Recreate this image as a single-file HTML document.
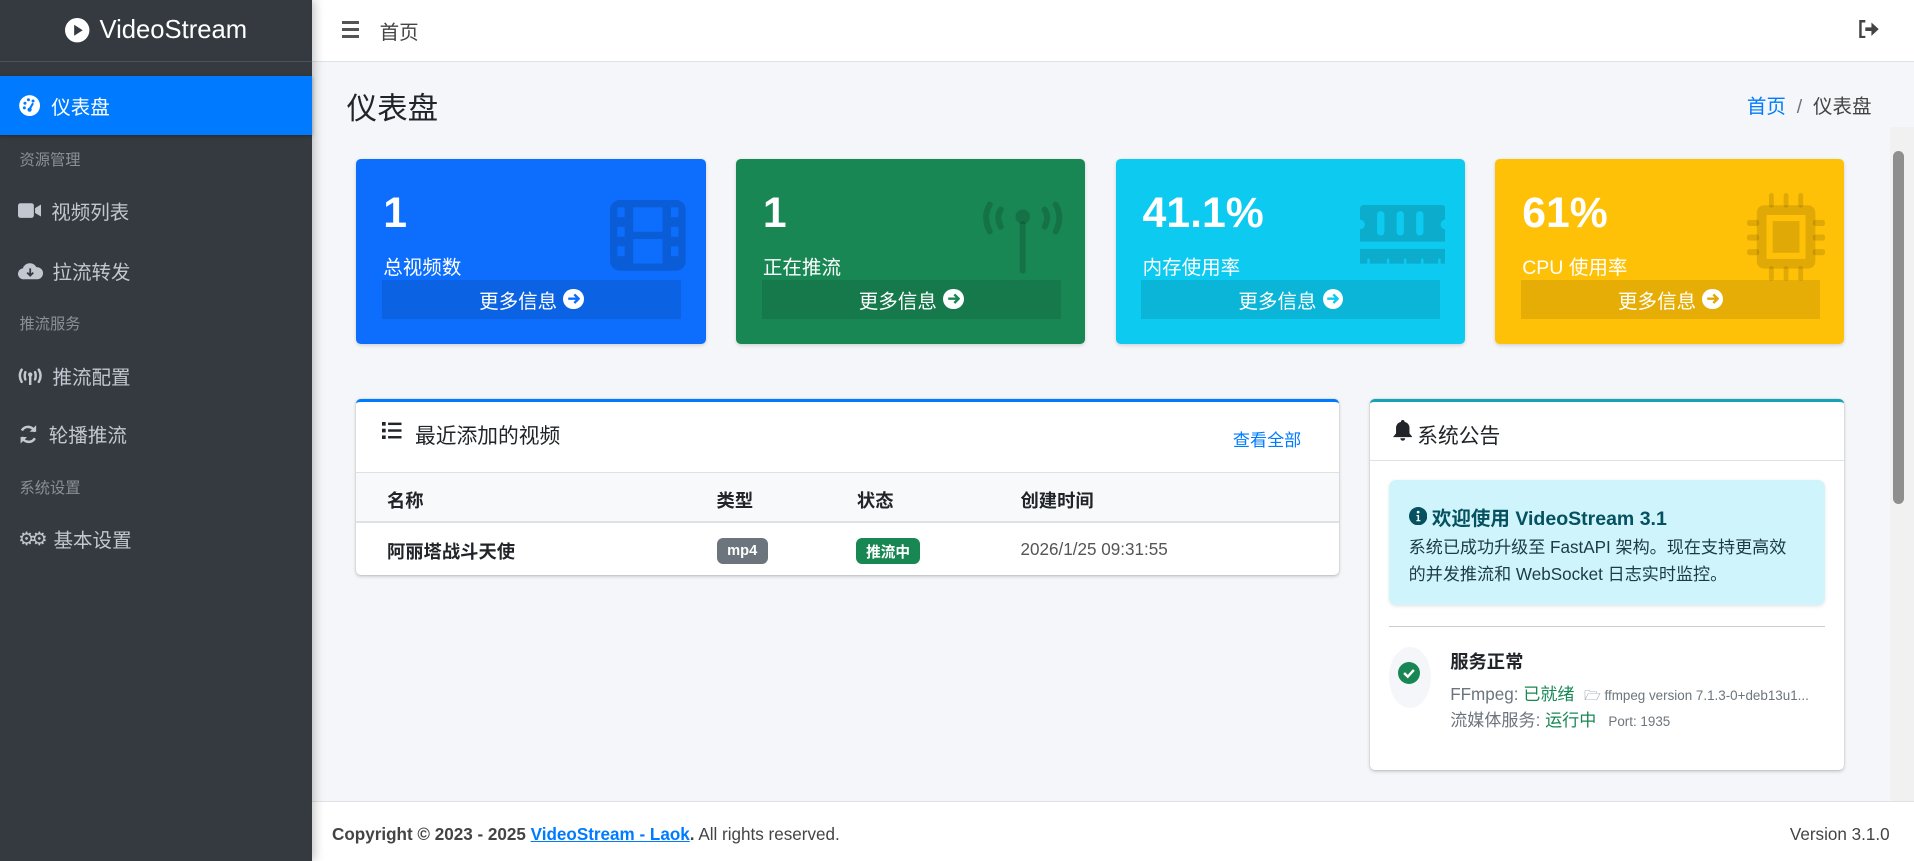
<!DOCTYPE html>
<html><head><meta charset="utf-8"><style>
*{box-sizing:border-box;margin:0;padding:0}
html{zoom:1.2207}
body{width:1568px;height:705px;overflow:hidden;position:relative;background:#f4f6f9;font-family:"Liberation Sans","Noto Sans CJK SC",sans-serif;color:#212529}
.abs{position:absolute}
.side{left:0;top:0;width:256px;height:705px;background:#343a40;box-shadow:2px 0 8px rgba(0,0,0,.25);z-index:2}
.brand{height:51px;border-bottom:1px solid #4b545c;color:#fff;font-size:21px;font-weight:300;display:flex;align-items:center;justify-content:center;gap:8px}
.nav{position:absolute;left:0;width:256px;height:49px;display:flex;align-items:center;padding-left:15px;color:#c2c7d0;font-size:16px;gap:8px}
.nav.act{background:#007bff;color:#fff;box-shadow:0 1px 3px rgba(0,0,0,.3)}
.hdr{position:absolute;left:16px;font-size:12.5px;color:#8a9096}
.top{left:256px;top:0;width:1312px;height:51px;background:#fff;border-bottom:1px solid #dee2e6}
.card{position:absolute;top:130px;width:286px;height:152px;border-radius:4px;color:#fff;box-shadow:0 1px 3px rgba(0,0,0,.15)}
.card .n{position:absolute;left:22px;top:25px;font-size:35px;font-weight:bold}
.card .l{position:absolute;left:22px;top:76px;font-size:16px}
.card .f{position:absolute;left:21px;top:99px;width:245px;height:32px;background:rgba(0,0,0,.1);font-size:16px;display:flex;align-items:center;justify-content:center;gap:5px}
.card svg.ic{position:absolute;right:16px;top:34px}
.arr{width:17px;height:17px;border-radius:50%;background:#fff;display:inline-flex;align-items:center;justify-content:center}
.box{position:absolute;background:#fff;border-radius:4px;box-shadow:0 0 1px rgba(0,0,0,.2),0 1px 3px rgba(0,0,0,.2)}
.th{position:absolute;font-weight:bold;font-size:15px;top:399px}
.badge{position:absolute;top:441px;height:21px;border-radius:5px;color:#fff;font-size:12px;font-weight:bold;display:flex;align-items:center;justify-content:center}
</style></head><body>
<div class="abs side">
 <div class="brand"><svg width="20" height="20" viewBox="0 0 20 20"><circle cx="10" cy="10" r="10" fill="#fff"/><path d="M7.5 5.5L14.5 10L7.5 14.5Z" fill="#343a40"/></svg>VideoStream</div>
 <div class="nav act" style="top:62px"><svg width="19" height="19" viewBox="0 0 20 20"><circle cx="10" cy="10" r="9" fill="#fff"/><circle cx="6" cy="8" r="1.3" fill="#007bff"/><circle cx="9" cy="5" r="1.3" fill="#007bff"/><circle cx="13" cy="6" r="1.3" fill="#007bff"/><circle cx="5.5" cy="12" r="1.3" fill="#007bff"/><path d="M10 13L13 8" stroke="#007bff" stroke-width="1.8"/><circle cx="10" cy="13.5" r="1.8" fill="#007bff"/></svg>仪表盘</div>
 <div class="hdr" style="top:121px">资源管理</div>
 <div class="nav" style="top:148px"><svg width="19" height="14" viewBox="0 0 19 14"><rect x="0" y="1" width="13" height="12" rx="2" fill="#c2c7d0"/><path d="M14 5L19 2V12L14 9Z" fill="#c2c7d0"/></svg>视频列表</div>
 <div class="nav" style="top:197px"><svg width="20" height="16" viewBox="0 0 20 16"><path d="M5 15A4.5 4.5 0 0 1 4 6A6 6 0 0 1 15 5A5 5 0 0 1 16 15Z" fill="#c2c7d0"/><path d="M10 6V12M7.5 9.5L10 12L12.5 9.5" stroke="#343a40" stroke-width="1.5" fill="none"/></svg> 拉流转发</div>
 <div class="hdr" style="top:256px">推流服务</div>
 <div class="nav" style="top:283px"><svg width="20" height="16" viewBox="0 0 20 16" fill="none" stroke="#c2c7d0" stroke-width="2" stroke-linecap="round"><path d="M3 3Q0 8 3 13M6 5Q5 8 6 11M17 3Q20 8 17 13M14 5Q15 8 14 11M10 8V15"/><circle cx="10" cy="7" r="1.8" fill="#c2c7d0" stroke="none"/></svg>推流配置</div>
 <div class="nav" style="top:331px"><svg width="17" height="17" viewBox="0 0 16 16"><path d="M13 6A5.5 5.5 0 0 0 3 5M3 10A5.5 5.5 0 0 0 13 11" stroke="#c2c7d0" stroke-width="2" fill="none"/><path d="M14 1V6H9Z M2 15V10H7Z" fill="#c2c7d0"/></svg> 轮播推流</div>
 <div class="hdr" style="top:390px">系统设置</div>
 <div class="nav" style="top:417px"><span style="font-size:15px;letter-spacing:-3px">⚙⚙</span> 基本设置</div>
</div>
<div class="abs top">
 <div class="abs" style="left:24px;top:17px;width:14px"><div style="height:2.5px;background:#555;margin-bottom:3.5px"></div><div style="height:2.5px;background:#555;margin-bottom:3.5px"></div><div style="height:2.5px;background:#555"></div></div>
 <div class="abs" style="left:55px;top:13px;font-size:16px;color:#444">首页</div>
 <svg class="abs" style="left:1266px;top:16px" width="17" height="15" viewBox="0 0 17 15"><path d="M6 1H2V14H6" stroke="#444" stroke-width="2" fill="none"/><path d="M6 6H11V2L17 7.5L11 13V9H6Z" fill="#444"/></svg>
</div>
<div class="abs" style="left:1548px;top:104px;width:20px;height:552px;background:#f1f1f1"></div>
<div class="abs" style="left:1551px;top:124px;width:9px;height:289px;background:#8f8f8f;border-radius:5px"></div>
<div class="abs" style="left:284px;top:69px;font-size:25px">仪表盘</div>
<div class="abs" style="left:1431px;top:74px;font-size:16px;color:#6c757d"><span style="color:#007bff">首页</span> &nbsp;/&nbsp; <span style="color:#444">仪表盘</span></div>

<div class="card" style="left:292px;background:#0d6efd"><div class="n">1</div><div class="l">总视频数</div>
<svg class="ic" width="62" height="58" viewBox="0 0 62 58" fill="rgba(0,0,0,.15)"><path d="M8 0H54A8 8 0 0 1 62 8V50A8 8 0 0 1 54 58H8A8 8 0 0 1 0 50V8A8 8 0 0 1 8 0ZM6 6V14H12V6ZM6 22V30H12V22ZM6 38V46H12V38ZM50 6V14H56V6ZM50 22V30H56V22ZM50 38V46H56V38ZM19 6V26H43V6ZM19 32V52H43V32Z" fill-rule="evenodd"/></svg>
<div class="f">更多信息 <span class="arr"><svg width="11" height="11" viewBox="0 0 11 11"><path d="M1 5.5H9M6 2L9.5 5.5L6 9" stroke="#0d6efd" stroke-width="2" fill="none"/></svg></span></div></div>
<div class="card" style="left:603px;background:#198754"><div class="n">1</div><div class="l">正在推流</div>
<svg class="ic" width="70" height="70" viewBox="0 0 70 70" style="top:26px" fill="none" stroke="rgba(0,0,0,.15)" stroke-width="5" stroke-linecap="round"><path d="M8 12Q2 22 8 34M17 16Q13 22 17 30M62 12Q68 22 62 34M53 16Q57 22 53 30M35 28V66"/><circle cx="35" cy="22" r="6" fill="rgba(0,0,0,.15)" stroke="none"/></svg>
<div class="f">更多信息 <span class="arr"><svg width="11" height="11" viewBox="0 0 11 11"><path d="M1 5.5H9M6 2L9.5 5.5L6 9" stroke="#198754" stroke-width="2" fill="none"/></svg></span></div></div>
<div class="card" style="left:914px;background:#0dcaf0"><div class="n">41.1%</div><div class="l">内存使用率</div>
<svg class="ic" width="70" height="56" viewBox="0 0 70 56" style="top:38px" fill="rgba(0,0,0,.15)"><path d="M3 0H67A3 3 0 0 1 70 3V12A4 4 0 0 0 70 20V30H0V20A4 4 0 0 0 0 12V3A3 3 0 0 1 3 0ZM14 8V22A3 3 0 0 0 20 22V8A3 3 0 0 0 14 8ZM30 8V22A3 3 0 0 0 36 22V8A3 3 0 0 0 30 8ZM46 8V22A3 3 0 0 0 52 22V8A3 3 0 0 0 46 8ZM0 36H70V48H66V44H64V48H52V44H50V48H38V44H36V48H24V44H22V48H8V44H6V48H0Z" fill-rule="evenodd"/></svg>
<div class="f">更多信息 <span class="arr"><svg width="11" height="11" viewBox="0 0 11 11"><path d="M1 5.5H9M6 2L9.5 5.5L6 9" stroke="#0dcaf0" stroke-width="2" fill="none"/></svg></span></div></div>
<div class="card" style="left:1225px;background:#ffc107"><div class="n">61%</div><div class="l">CPU 使用率</div>
<svg class="ic" width="64" height="72" viewBox="0 0 64 72" style="top:28px" fill="rgba(0,0,0,.12)"><path d="M14 10H50A6 6 0 0 1 56 16V56A6 6 0 0 1 50 62H14A6 6 0 0 1 8 56V16A6 6 0 0 1 14 10ZM16 18V54H48V18Z" fill-rule="evenodd"/><rect x="21" y="23" width="22" height="26"/><rect x="18" y="0" width="4" height="12" rx="2"/><rect x="30" y="0" width="4" height="12" rx="2"/><rect x="42" y="0" width="4" height="12" rx="2"/><rect x="18" y="60" width="4" height="12" rx="2"/><rect x="30" y="60" width="4" height="12" rx="2"/><rect x="42" y="60" width="4" height="12" rx="2"/><rect x="0" y="22" width="10" height="5" rx="2"/><rect x="0" y="34" width="10" height="5" rx="2"/><rect x="0" y="46" width="10" height="5" rx="2"/><rect x="54" y="22" width="10" height="5" rx="2"/><rect x="54" y="34" width="10" height="5" rx="2"/><rect x="54" y="46" width="10" height="5" rx="2"/></svg>
<div class="f">更多信息 <span class="arr"><svg width="11" height="11" viewBox="0 0 11 11"><path d="M1 5.5H9M6 2L9.5 5.5L6 9" stroke="#e0a800" stroke-width="2" fill="none"/></svg></span></div></div>

<div class="box" style="left:292px;top:327px;width:805px;height:144px;border-top:3px solid #007bff;overflow:hidden">
 <div class="abs" style="left:0;top:57px;width:805px;height:42px;background:#f8f9fa;border-top:1px solid #dee2e6;border-bottom:2px solid #dee2e6"></div>
</div>
<svg class="abs" style="left:313px;top:346px" width="16" height="14" viewBox="0 0 16 14" fill="#212529"><rect x="0" y="0" width="3" height="3"/><rect x="0" y="5.5" width="3" height="3"/><rect x="0" y="11" width="3" height="3"/><rect x="5" y="0.5" width="11" height="2"/><rect x="5" y="6" width="11" height="2"/><rect x="5" y="11.5" width="11" height="2"/></svg>
<div class="abs" style="left:340px;top:343px;font-size:17px">最近添加的视频</div>
<div class="abs" style="left:1010px;top:349px;font-size:14px;color:#007bff">查看全部</div>
<div class="th" style="left:317px">名称</div><div class="th" style="left:587px">类型</div><div class="th" style="left:702px">状态</div><div class="th" style="left:836px">创建时间</div>
<div class="abs" style="left:317px;top:441px;font-size:15px;font-weight:bold">阿丽塔战斗天使</div>
<div class="badge" style="left:587px;width:42px;background:#6c757d">mp4</div>
<div class="badge" style="left:701px;width:53px;background:#198754">推流中</div>
<div class="abs" style="left:836px;top:442px;font-size:14px;color:#555">2026/1/25 09:31:55</div>

<div class="box" style="left:1122px;top:327px;width:389px;height:304px;border-top:3px solid #17a2b8">
 <div class="abs" style="left:0;top:47px;width:389px;height:1px;background:#dee2e6"></div>
</div>
<svg class="abs" style="left:1141px;top:344px" width="16" height="18" viewBox="0 0 16 18" fill="#212529"><path d="M8 0A1.5 1.5 0 0 1 9.5 1.5A5 5 0 0 1 13.5 7V11L16 14H0L2.5 11V7A5 5 0 0 1 6.5 1.5A1.5 1.5 0 0 1 8 0ZM6 15H10A2 2 0 0 1 6 15Z"/></svg>
<div class="abs" style="left:1161px;top:343px;font-size:17px">系统公告</div>
<div class="abs" style="left:1138px;top:393px;width:357px;height:103px;background:#cff4fc;border-radius:6px;box-shadow:0 1px 3px rgba(0,0,0,.1)">
 <div class="abs" style="left:16px;top:18px;font-size:16px;font-weight:bold;color:#055160;display:flex;align-items:center;gap:4px"><svg width="15" height="15" viewBox="0 0 16 16"><circle cx="8" cy="8" r="8" fill="#055160"/><circle cx="8" cy="4.5" r="1.2" fill="#fff"/><path d="M6.5 7H8.8V11.5H10V12.5H6.5V11.5H7.5V8H6.5Z" fill="#fff"/></svg>欢迎使用 VideoStream 3.1</div>
 <div class="abs" style="left:16px;top:45px;width:316px;font-size:14px;line-height:22px;color:#1c3b44">系统已成功升级至 FastAPI 架构。现在支持更高效的并发推流和 WebSocket 日志实时监控。</div>
</div>
<div class="abs" style="left:1138px;top:513px;width:357px;height:1px;background:#ccc"></div>
<div class="abs" style="left:1138px;top:530px;width:34px;height:50px;border-radius:50%;background:#f4f6f9"></div>
<svg class="abs" style="left:1145px;top:542px" width="18" height="18" viewBox="0 0 18 18"><circle cx="9" cy="9" r="9" fill="#198754"/><path d="M5 9L8 12L13 6.5" stroke="#fff" stroke-width="2" fill="none"/></svg>
<div class="abs" style="left:1188px;top:531px;font-size:15px;font-weight:bold">服务正常</div>
<div class="abs" style="left:1188px;top:557px;font-size:14px;color:#6c757d;white-space:nowrap">FFmpeg: <span style="color:#198754">已就绪</span> <span style="font-size:11px;margin-left:4px">🗁 ffmpeg version 7.1.3-0+deb13u1...</span></div>
<div class="abs" style="left:1188px;top:578px;font-size:14px;color:#6c757d;white-space:nowrap">流媒体服务: <span style="color:#198754">运行中</span> <span style="font-size:11px;margin-left:6px">Port: 1935</span></div>

<div class="abs" style="left:256px;top:656px;width:1312px;height:49px;background:#fff;border-top:1px solid #dee2e6">
 <div class="abs" style="left:16px;top:19px;font-size:14px;color:#444"><b>Copyright © 2023 - 2025 <a style="color:#007bff;text-decoration:underline">VideoStream - Laok</a>.</b> All rights reserved.</div>
 <div class="abs" style="right:20px;top:19px;font-size:14px;color:#444">Version 3.1.0</div>
</div>
</body></html>
